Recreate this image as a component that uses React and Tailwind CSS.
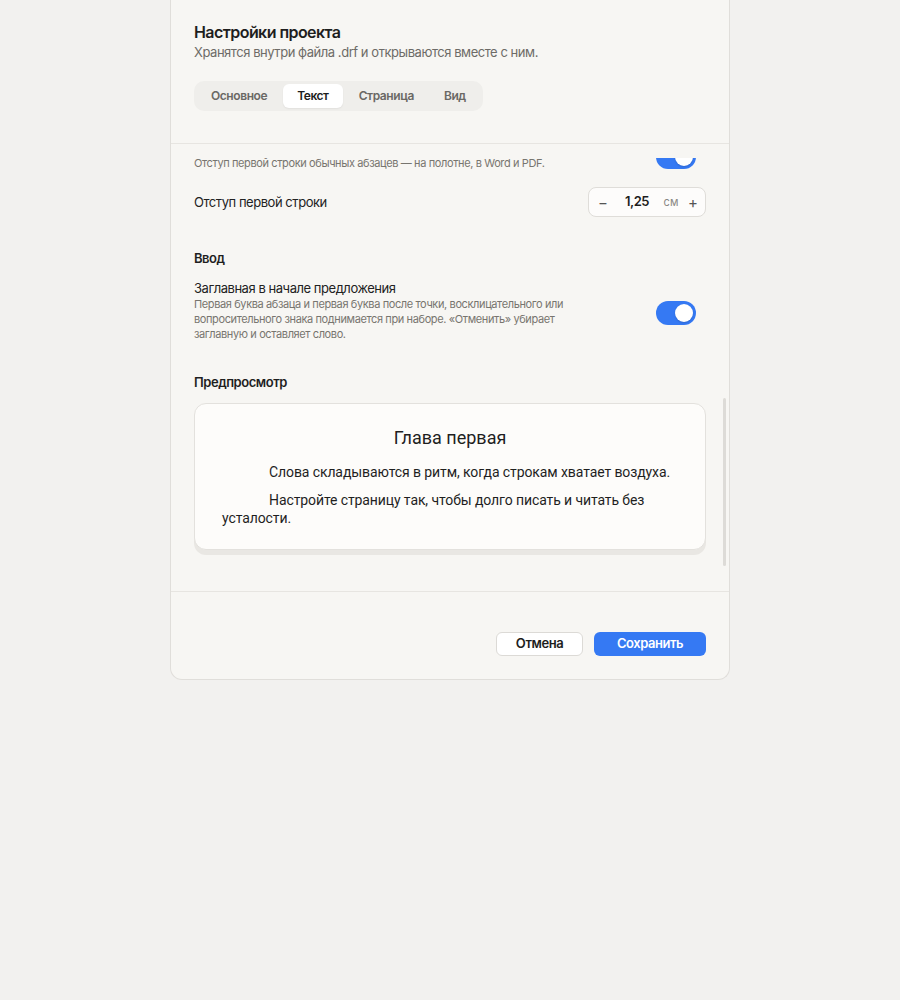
import { useLayoutEffect, useRef } from "react";

const ui = { fontFamily: "Inter, 'Noto Sans', 'Liberation Sans', sans-serif" };
const previewFont = { fontFamily: "Roboto, 'Noto Sans', 'Liberation Sans', sans-serif" };

const tight = "tracking-[-0.035em]";

const tabs = ["Основное", "Текст", "Страница", "Вид"];

function Toggle({ on = true }) {
  return (
    <div
      className={`flex h-6 w-10 shrink-0 items-center rounded-full px-[3px] ${
        on ? "justify-end bg-[#3579f3]" : "justify-start bg-[#d9d7d3]"
      }`}
    >
      <div className="h-[18px] w-[18px] rounded-full bg-white shadow-[0_1px_2px_rgba(0,0,0,0.15)]" />
    </div>
  );
}

function ToggleRow({ title, desc, on }) {
  return (
    <div className="flex items-center gap-6">
      <div className="flex-1">
        <div className={`text-[13px] leading-[18px] text-[#222] ${tight}`}>{title}</div>
        <div className={`text-[11px] leading-[15px] text-[#77756f] ${tight}`}>{desc}</div>
      </div>
      <div className="pr-[10px] pt-[5px]">
        <Toggle on={on} />
      </div>
    </div>
  );
}

function Stepper({ value, unit }) {
  return (
    <div className="grid h-[30px] w-[118px] grid-cols-[28px_40px_28px_16px] items-center rounded-lg border border-[#dfddd9] bg-[#fdfcfb]">
      <span className="text-center text-[15px] leading-none text-[#555]">−</span>
      <span className={`text-center text-[13px] font-semibold text-[#1d1d1d] ${tight}`}>{value}</span>
      <span className="text-center text-[11px] text-[#8a8884]">{unit}</span>
      <span className="text-center text-[15px] leading-none text-[#555]">+</span>
    </div>
  );
}

function Section({ title, className = "", children }) {
  return (
    <section className={className}>
      {title && (
        <h3 className={`mb-[11px] text-[13px] font-semibold leading-5 text-[#1f1f1f] ${tight}`}>{title}</h3>
      )}
      <div className="flex flex-col gap-4">{children}</div>
    </section>
  );
}

export default function App() {
  const bodyRef = useRef(null);

  // the settings list opens scrolled down to the preview
  useLayoutEffect(() => {
    const el = bodyRef.current;
    if (el) el.scrollTop = el.scrollHeight;
  }, []);

  return (
    <div className="min-h-screen bg-[#f2f1ef]" style={ui}>
      <div className="mx-auto w-[560px] rounded-b-xl border border-t-0 border-[#e0deda] bg-[#f7f6f3]">
        {/* header */}
        <div className="border-b border-[#e7e5e1] px-[23px] pb-8 pt-[21px]">
          <h2 className={`text-[16px] font-semibold leading-[22px] text-[#1e1e1e] ${tight}`}>Настройки проекта</h2>
          <p className={`text-[13px] leading-[18px] text-[#6d6b67] ${tight}`}>
            Хранятся внутри файла .drf и открываются вместе с ним.
          </p>
          <div className="mt-5 inline-flex gap-0.5 rounded-[10px] bg-[#efeeeb] p-[3px]">
            {tabs.map((t) => (
              <div
                key={t}
                className={`rounded-md px-3.5 py-[4px] text-[12px] font-semibold leading-4 ${tight} ${
                  t === "Текст"
                    ? "bg-white text-[#1d1d1d] shadow-[0_1px_2px_rgba(0,0,0,0.06)]"
                    : "text-[#6a6864]"
                }`}
              >
                {t}
              </div>
            ))}
          </div>
        </div>

        {/* scrollable body */}
        <div className="relative">
          <div ref={bodyRef} className="h-[447px] overflow-hidden">
            <div className="flex flex-col px-[23px] pb-[41px] pt-5">
              <Section title="Абзацы">
                <ToggleRow
                  title="Красная строка"
                  desc="Сдвигать первую строку каждого абзаца вправо."
                  on
                />
                <ToggleRow
                  title="Отступ первой строки"
                  desc="Отступ первой строки обычных абзацев — на полотне, в Word и PDF."
                  on
                />
                <div className="flex items-center justify-between">
                  <span className={`text-[13px] leading-[18px] text-[#222] ${tight}`}>Отступ первой строки</span>
                  <Stepper value="1,25" unit="см" />
                </div>
              </Section>

              <Section title="Ввод" className="mt-[31px]">
                <ToggleRow
                  title="Заглавная в начале предложения"
                  desc={
                    <>
                      Первая буква абзаца и первая буква после точки, восклицательного или
                      <br />
                      вопросительного знака поднимается при наборе. «Отменить» убирает
                      <br />
                      заглавную и оставляет слово.
                    </>
                  }
                  on
                />
              </Section>

              <Section title="Предпросмотр" className="mt-[30px]">
                <div
                  className="rounded-xl border border-[#e3e1dd] bg-[#fdfcfa] px-[27px] pb-[22px] pt-[22px] text-[#1f1f1f] shadow-[0_5px_0_#e9e7e3]"
                  style={previewFont}
                >
                  <h4 className="text-center text-[18px] leading-6">Глава первая</h4>
                  <p className="mt-[13px] indent-[47px] text-[14px] leading-[18px] tracking-[-0.1px]">
                    Слова складываются в ритм, когда строкам хватает воздуха.
                  </p>
                  <p className="mt-[10px] indent-[47px] text-[14px] leading-[18px] tracking-[-0.1px]">
                    Настройте страницу так, чтобы долго писать и читать без усталости.
                  </p>
                </div>
              </Section>
            </div>
          </div>
          {/* fade strip under the header edge */}
          <div className="absolute inset-x-0 top-0 h-[14px] bg-[#f7f6f3]" />
          {/* scroll thumb */}
          <div className="absolute right-[3px] top-[254px] h-[168px] w-[3px] rounded-full bg-[#dddbd7]" />
        </div>

        {/* footer */}
        <div className="flex justify-end gap-[11px] border-t border-[#e7e5e1] px-[23px] pb-[23px] pt-10">
          <button
            className={`h-6 w-[87px] rounded-md border border-[#dcdad6] bg-white text-[13px] font-semibold text-[#1d1d1d] ${tight}`}
          >
            Отмена
          </button>
          <button className={`h-6 w-[112px] rounded-md bg-[#3579f3] text-[13px] font-semibold text-white ${tight}`}>
            Сохранить
          </button>
        </div>
      </div>
    </div>
  );
}
